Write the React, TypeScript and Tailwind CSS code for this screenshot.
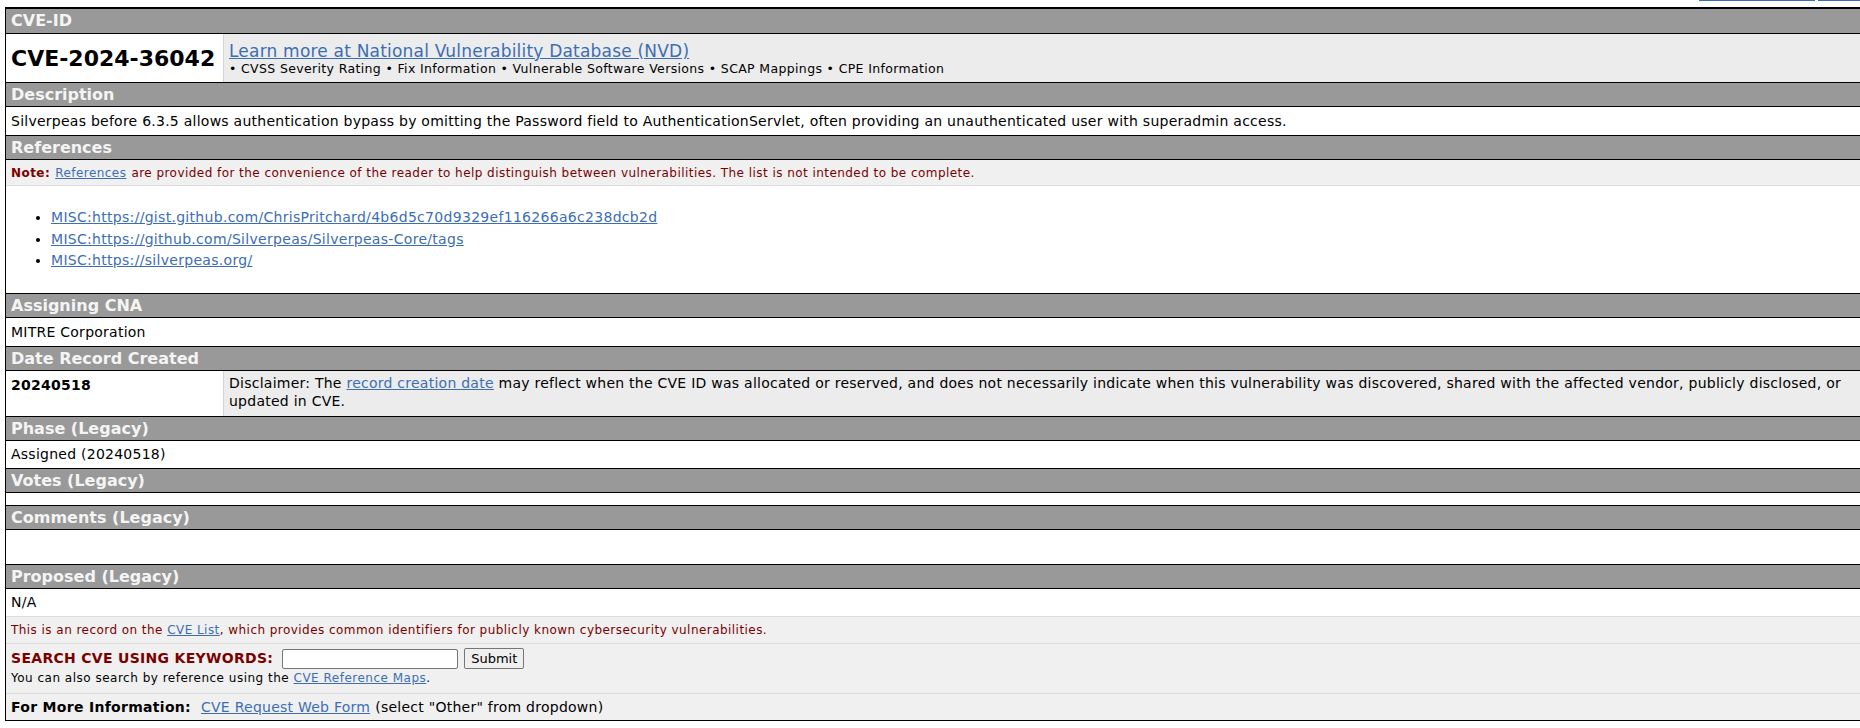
import React from "react";

const font = { fontFamily: '"DejaVu Sans", Verdana, sans-serif' };

function Header({ children, first }: { children: React.ReactNode; first?: boolean }) {
  return (
    <div
      className={`bg-[#999999] h-[25px] ${first ? "border-b" : "border-y"} border-black flex items-center px-[5px] text-[16px] font-bold text-[#f4f4f4]`}
    >
      {children}
    </div>
  );
}

const link = "text-[#3c6eb4] underline";
const body = "text-[14px] tracking-[0.25px]";
const small = "text-[12px] tracking-[0.45px]";

export default function App() {
  return (
    <div className="w-[1860px] h-[728px] overflow-hidden bg-white text-black" style={font}>
      <div className="h-[7px] flex justify-end items-start">
        <span className="h-[1px] w-[116px] bg-[#3c6eb4] mr-[3px]" />
        <span className="h-[1px] w-[42px] bg-[#3c6eb4]" />
      </div>
      <div className="ml-[5px] w-[1870px] border-t-2 border-l border-black">
        <Header first>CVE-ID</Header>
        <div className="flex h-[48px]">
          <div className="w-[217px] flex items-center px-[5px] text-[22px] font-bold">CVE-2024-36042</div>
          <div className="flex-1 bg-[#ececec] border-l border-[#d4d4d4] px-[5px] flex flex-col justify-center">
            <a className={`${link} text-[17px] tracking-[0.2px] leading-[20px]`}>Learn more at National Vulnerability Database (NVD)</a>
            <div className="text-[12.5px] tracking-[0.35px] leading-[15px]">
              • CVSS Severity Rating • Fix Information • Vulnerable Software Versions • SCAP Mappings • CPE Information
            </div>
          </div>
        </div>
        <Header>Description</Header>
        <div className={`h-[28px] flex items-center px-[5px] ${body}`}>
          Silverpeas before 6.3.5 allows authentication bypass by omitting the Password field to AuthenticationServlet, often providing an unauthenticated user with superadmin access.
        </div>
        <Header>References</Header>
        <div className={`h-[26px] flex items-center px-[5px] ${small} bg-[#f0f0f0] border-b border-[#dcdcdc] text-[#7a0000]`}>
          <span className="font-bold mr-[5px]">Note:</span>
          <a className={`${link} mr-[5px]`}>References</a>
          are provided for the convenience of the reader to help distinguish between vulnerabilities. The list is not intended to be complete.
        </div>
        <div className="h-[107px] pt-[21px] text-[14px] tracking-[0.3px]">
          <ul className="list-disc pl-[45px] leading-[21.5px]">
            <li><a className={link}>MISC:https://gist.github.com/ChrisPritchard/4b6d5c70d9329ef116266a6c238dcb2d</a></li>
            <li><a className={link}>MISC:https://github.com/Silverpeas/Silverpeas-Core/tags</a></li>
            <li><a className={link}>MISC:https://silverpeas.org/</a></li>
          </ul>
        </div>
        <Header>Assigning CNA</Header>
        <div className={`h-[28px] flex items-center px-[5px] ${body}`}>MITRE Corporation</div>
        <Header>Date Record Created</Header>
        <div className={`flex h-[45px] ${body}`}>
          <div className="w-[217px] px-[5px] pt-[4px] font-bold">20240518</div>
          <div className="flex-1 bg-[#ececec] border-l border-[#d4d4d4] pl-[5px] pr-[12px] pt-[3px] leading-[18px]">
            <p>
              Disclaimer: The <a className={link}>record creation date</a> may reflect when the CVE ID was allocated or reserved, and does not necessarily indicate when this vulnerability was discovered, shared with the affected vendor, publicly disclosed, or updated in CVE.
            </p>
          </div>
        </div>
        <Header>Phase (Legacy)</Header>
        <div className={`h-[27px] flex items-center px-[5px] ${body}`}>Assigned (20240518)</div>
        <Header>Votes (Legacy)</Header>
        <div className="h-[12px]" />
        <Header>Comments (Legacy)</Header>
        <div className="h-[34px]" />
        <Header>Proposed (Legacy)</Header>
        <div className={`h-[27px] flex items-center px-[5px] ${body}`}>N/A</div>
        <div className={`h-[27px] flex items-center px-[5px] ${small} bg-[#f0f0f0] border-t border-[#dcdcdc] text-[#7a0000]`}>
          This is an record on the&nbsp;<a className={link}>CVE List</a>, which provides common identifiers for publicly known cybersecurity vulnerabilities.
        </div>
        <div className="h-[50px] bg-[#f0f0f0] border-t border-[#dcdcdc] px-[5px] pt-[4px]">
          <div className="flex items-center gap-[6px]">
            <span className="text-[14px] tracking-[0.3px] font-bold text-[#7a0000]">SEARCH CVE USING KEYWORDS:</span>
            <input className="w-[176px] h-[20px] bg-white border border-[#767676] rounded-[2px] ml-[3px]" />
            <button className="h-[21px] px-[6px] text-[13px] bg-[#efefef] border border-[#767676] rounded-[2px]" style={font}>Submit</button>
          </div>
          <div className="text-[12px] tracking-[0.5px] leading-[16px] mt-[1px]">
            You can also search by reference using the <a className={link}>CVE Reference Maps</a>.
          </div>
        </div>
        <div className={`h-[28px] bg-[#f0f0f0] border-t border-[#dcdcdc] border-b border-b-black flex items-center px-[5px] ${body}`}>
          <span className="font-bold mr-[10px] tracking-[0.3px]">For More Information:</span>
          <a className={`${link} mr-[5px]`}>CVE Request Web Form</a>
          (select "Other" from dropdown)
        </div>
      </div>
    </div>
  );
}
